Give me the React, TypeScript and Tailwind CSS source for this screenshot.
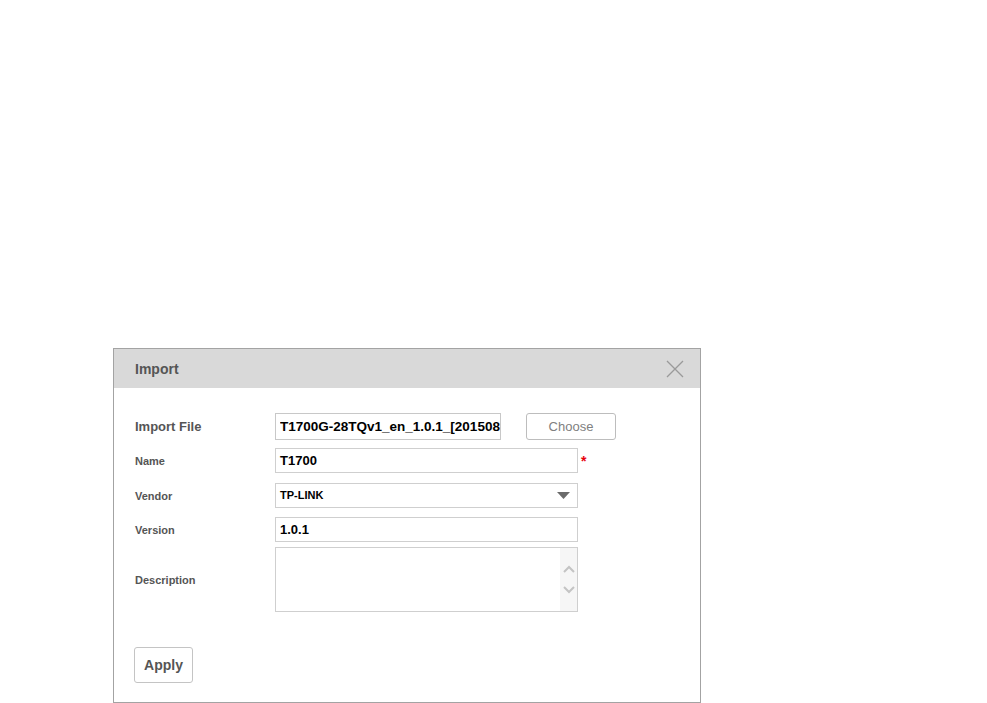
import React from 'react';

function CloseIcon() {
  return (
    <svg width="18" height="18" viewBox="0 0 18 18" fill="none" stroke="#9a9a9a" strokeWidth="1.3">
      <path d="M1 1L17 17M17 1L1 17" />
    </svg>
  );
}

function Label({ children, big }: { children: React.ReactNode; big?: boolean }) {
  return (
    <div className={`w-[140px] shrink-0 font-bold text-[#555] ${big ? 'text-[13px]' : 'text-[11px] pt-[2px]'}`}>
      {children}
    </div>
  );
}

export default function App() {
  return (
    <div className="w-[987px] h-[703px] bg-white pt-[348px] pl-[113px]" style={{ fontFamily: '"Liberation Sans", Arial, sans-serif' }}>
      <div className="w-[588px] h-[355px] border border-[#a3a3a3] flex flex-col">
        <div className="h-[39px] bg-[#d9d9d9] flex items-center justify-between pl-[21px] pr-[16px]">
          <span className="text-[14px] font-bold text-[#555] pt-[2px]">Import</span>
          <CloseIcon />
        </div>

        <div className="flex flex-col pl-[21px] pt-[25px]">
          <div className="flex items-center h-[27px]">
            <Label big>Import File</Label>
            <input
              readOnly
              value="T1700G-28TQv1_en_1.0.1_[20150811-rel52563].bin"
              className="w-[226px] h-[27px] border border-[#c8c8c8] pl-[4px] text-[13.5px] font-bold text-black outline-none"
              style={{ fontFamily: '"Liberation Sans", Arial, sans-serif' }}
            />
            <button className="ml-[25px] w-[90px] h-[27px] border border-[#bdbdbd] rounded-[3px] text-[13px] text-[#808080] bg-white">
              Choose
            </button>
          </div>

          <div className="flex items-center h-[25px] mt-[8px]">
            <Label>Name</Label>
            <div className="w-[303px] h-[25px] border border-[#cfcfcf] flex items-center pl-[4px] text-[13px] font-bold text-black">
              T1700
            </div>
            <span className="ml-[3px] text-[14px] text-red-600 font-bold leading-none">*</span>
          </div>

          <div className="flex items-center h-[25px] mt-[10px]">
            <Label>Vendor</Label>
            <div className="w-[303px] h-[25px] border border-[#cfcfcf] flex items-center justify-between pl-[4px] pr-[7px] text-[11px] font-bold text-black">
              <span>TP-LINK</span>
              <svg width="13" height="7" viewBox="0 0 13 7">
                <path d="M0 0H13L6.5 7Z" fill="#6b6b6b" />
              </svg>
            </div>
          </div>

          <div className="flex items-center h-[25px] mt-[9px]">
            <Label>Version</Label>
            <div className="w-[303px] h-[25px] border border-[#cfcfcf] flex items-center pl-[4px] text-[13px] font-bold text-black">
              1.0.1
            </div>
          </div>

          <div className="flex items-center h-[65px] mt-[5px]">
            <Label>Description</Label>
            <div className="w-[303px] h-[65px] border border-[#cfcfcf] flex">
              <div className="flex-1" />
              <div className="w-[17px] bg-[#f6f6f6] flex flex-col items-center pt-[17px] gap-[13px]">
                <svg width="12" height="8" viewBox="0 0 12 8" fill="none" stroke="#c4c4c4" strokeWidth="2">
                  <path d="M1 7L6 2L11 7" />
                </svg>
                <svg width="12" height="8" viewBox="0 0 12 8" fill="none" stroke="#c4c4c4" strokeWidth="2">
                  <path d="M1 1L6 6L11 1" />
                </svg>
              </div>
            </div>
          </div>

          <button className="mt-[35px] ml-[-1px] w-[59px] h-[36px] border border-[#c4c4c4] rounded-[3px] text-[14px] font-bold text-[#555] bg-white">
            Apply
          </button>
        </div>
      </div>
    </div>
  );
}
